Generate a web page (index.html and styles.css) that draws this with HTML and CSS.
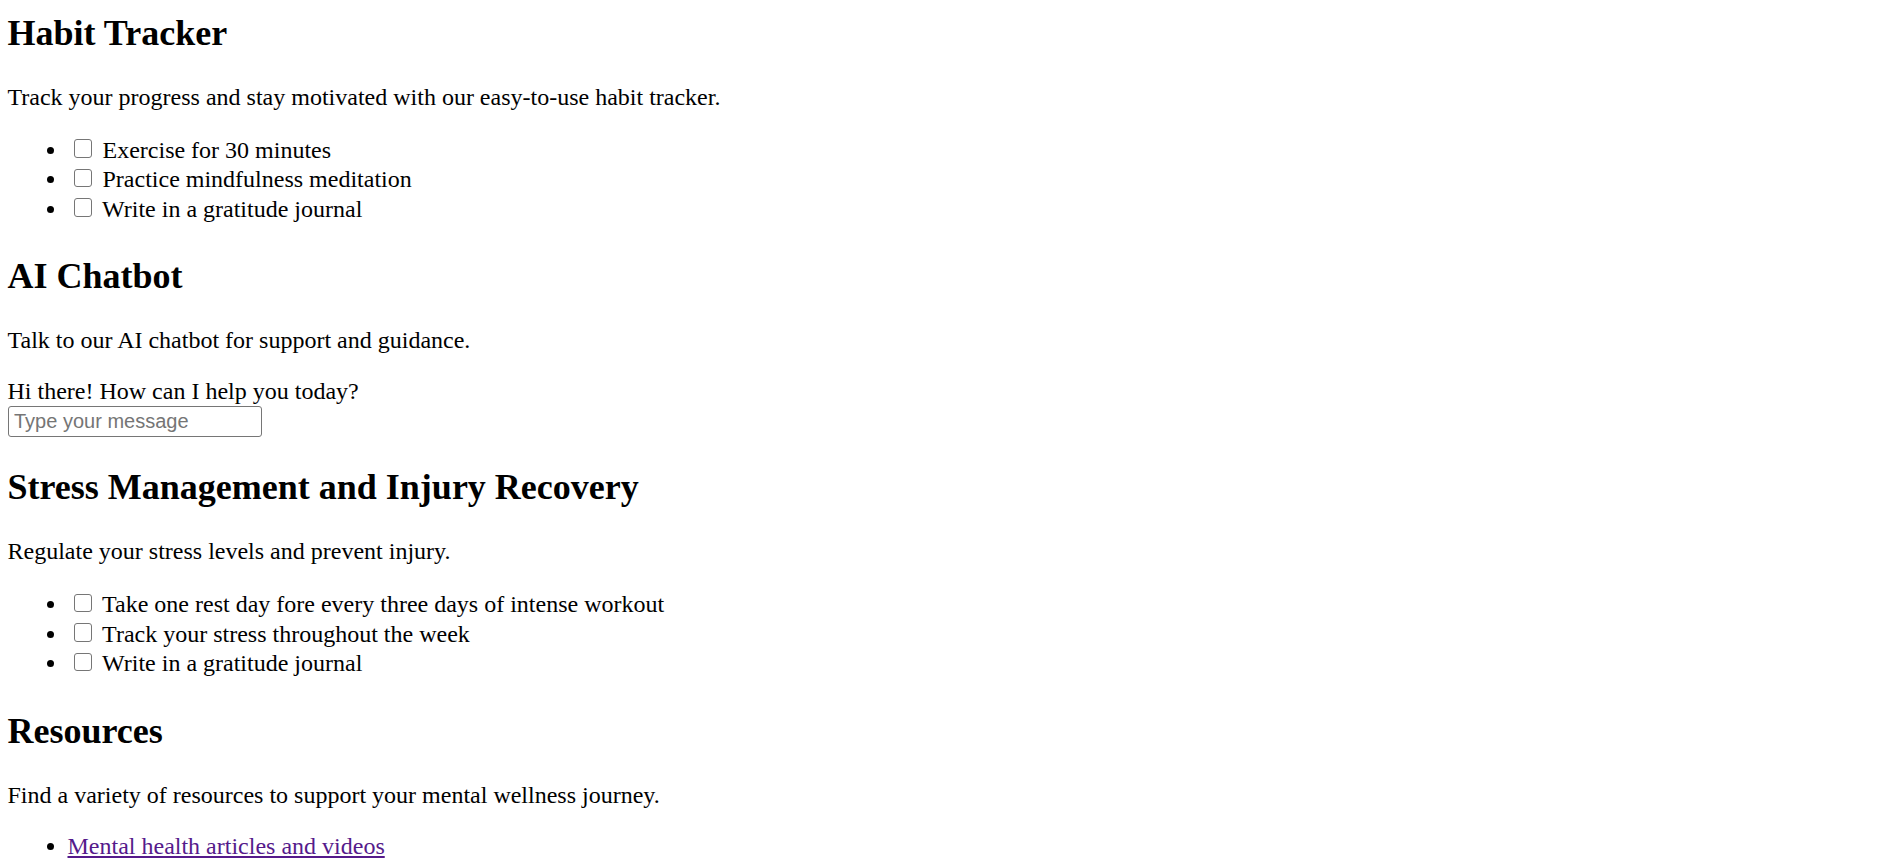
FILE: index.html
```html
<!DOCTYPE html>
<html lang="en">
<head>
<meta charset="utf-8">
<title>Mental Wellness</title>
<link rel="stylesheet" href="styles.css">
</head>
<body>
  <section class="section">
    <h2 class="title first">Habit Tracker</h2>
    <p class="text">Track your progress and stay motivated with our easy-to-use habit tracker.</p>
    <ul class="list checklist">
      <li><input class="check" type="checkbox"> Exercise for 30 minutes</li>
      <li><input class="check" type="checkbox"> Practice mindfulness meditation</li>
      <li><input class="check" type="checkbox"> Write in a gratitude journal</li>
    </ul>
  </section>
  <section class="section">
    <h2 class="title">AI Chatbot</h2>
    <p class="text">Talk to our AI chatbot for support and guidance.</p>
    <div class="chat">
      <div class="chat-msg">Hi there! How can I help you today?</div>
      <input class="chat-input" type="text" placeholder="Type your message">
    </div>
  </section>
  <section class="section">
    <h2 class="title">Stress Management and Injury Recovery</h2>
    <p class="text">Regulate your stress levels and prevent injury.</p>
    <ul class="list checklist">
      <li><input class="check" type="checkbox"> Take one rest day fore every three days of intense workout</li>
      <li><input class="check" type="checkbox"> Track your stress throughout the week</li>
      <li><input class="check" type="checkbox"> Write in a gratitude journal</li>
    </ul>
  </section>
  <section class="section">
    <h2 class="title">Resources</h2>
    <p class="text">Find a variety of resources to support your mental wellness journey.</p>
    <ul class="list links">
      <li><a class="link" href="#">Mental health articles and videos</a></li>
      <li><a class="link" href="#">Local support hotlines</a></li>
    </ul>
  </section>
</body>
</html>
```
FILE: styles.css
```css
html {
  background: #ffffff;
}
body {
  margin: 0;
  padding: 0 7.5px;
  font-family: "Liberation Serif", "Times New Roman", serif;
  font-size: 24px;
  line-height: 27px;
  color: #000000;
}
.section {
  display: block;
}
.title {
  font-size: 36px;
  line-height: 41px;
  font-weight: bold;
  margin: 30px 0;
}
.title.first {
  margin-top: 12.5px;
}
.text {
  margin: 24px 0;
}
.list {
  margin: 24px 0;
  padding-left: 60px;
}
.checklist {
  margin-top: 25px;
  padding-bottom: 1.5px;
}
.checklist li {
  line-height: 29.7px;
}
.check {
  -webkit-appearance: none;
  appearance: none;
  box-sizing: border-box;
  display: inline-block;
  width: 18.5px;
  height: 18.5px;
  margin: 0 4.5px 0 6px;
  vertical-align: baseline;
  border: 1.5px solid #767676;
  border-radius: 3px;
  background: #ffffff;
}
.chat-msg {
  display: block;
  line-height: 26px;
}
.chat-input {
  display: block;
  box-sizing: border-box;
  width: 254px;
  height: 31.4px;
  margin: 1.5px 0 0 0;
  padding: 0 5.5px;
  border: 1.5px solid #767676;
  border-radius: 3px;
  font-family: "Liberation Sans", Arial, sans-serif;
  font-size: 20px;
  color: #000000;
  background: #ffffff;
}
.chat-input::placeholder {
  color: #757575;
}
.link {
  color: #551a8b;
  text-decoration: underline;
}
```
